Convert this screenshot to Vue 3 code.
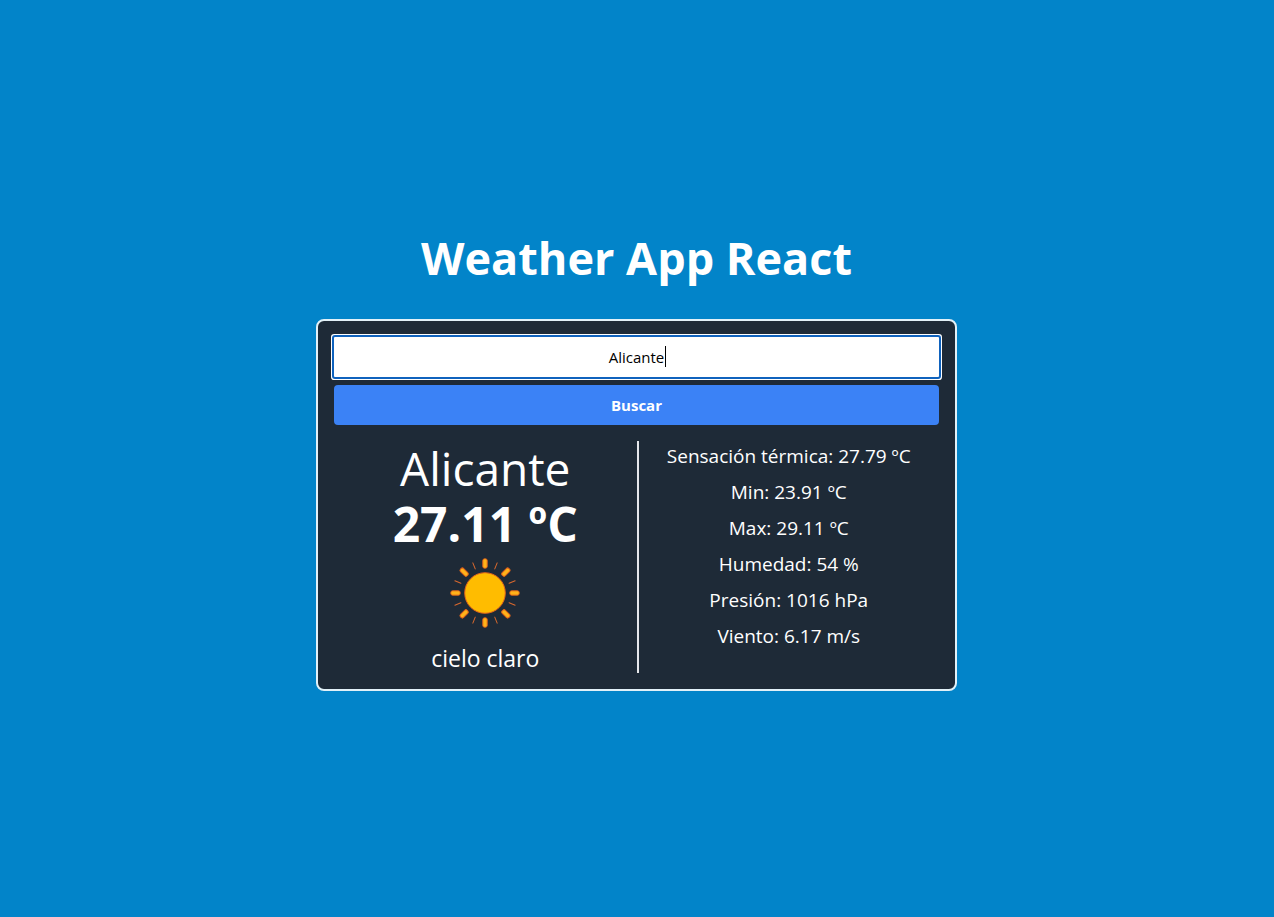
<script setup>
import { onMounted, ref } from 'vue'

const city = ref('Alicante')
const cityInput = ref(null)

const weather = {
  name: 'Alicante',
  temp: '27.11 ºC',
  description: 'cielo claro',
  details: [
    { label: 'Sensación térmica', value: '27.79 ºC' },
    { label: 'Min', value: '23.91 ºC' },
    { label: 'Max', value: '29.11 ºC' },
    { label: 'Humedad', value: '54 %' },
    { label: 'Presión', value: '1016 hPa' },
    { label: 'Viento', value: '6.17 m/s' },
  ],
}

const longRays = [0, 45, 90, 135, 180, 225, 270, 315]
const shortRays = [22, 68, 112, 158, 202, 248, 292, 338]

onMounted(() => {
  const el = cityInput.value
  el.focus()
  el.setSelectionRange(el.value.length, el.value.length)
})
</script>

<template>
  <main class="page">
    <h1 class="title">Weather App React</h1>
    <section class="card">
      <form class="search" @submit.prevent>
        <div class="field">
          <input
            ref="cityInput"
            v-model="city"
            class="search-input"
            type="text"
            aria-label="Ciudad"
            autocomplete="off"
            spellcheck="false"
          />
          <span class="caret" aria-hidden="true"></span>
        </div>
        <button class="search-button" type="submit">Buscar</button>
      </form>
      <div class="result">
        <div class="summary">
          <h2 class="city">{{ weather.name }}</h2>
          <p class="temp">{{ weather.temp }}</p>
          <svg class="icon" viewBox="0 0 80 80" aria-hidden="true">
            <g fill="#ffb31a" stroke="#e0621a" stroke-width="1">
              <rect
                v-for="a in longRays"
                :key="a"
                x="37.8"
                y="5.8"
                width="4.4"
                height="9.4"
                rx="1.8"
                :transform="`rotate(${a} 40 40)`"
              />
            </g>
            <g stroke="#d9692e" stroke-width="1" stroke-linecap="round">
              <line
                v-for="a in shortRays"
                :key="a"
                x1="40"
                y1="7.5"
                x2="40"
                y2="14"
                :transform="`rotate(${a} 40 40)`"
              />
            </g>
            <circle cx="40" cy="40" r="20.3" fill="#ffbc00" stroke="#e0621a" stroke-width="1" />
          </svg>
          <p class="description">{{ weather.description }}</p>
        </div>
        <ul class="details">
          <li v-for="d in weather.details" :key="d.label">{{ d.label }}: {{ d.value }}</li>
        </ul>
      </div>
    </section>
  </main>
</template>

<style>
body {
  margin: 0;
  background: #0284c9;
}
</style>

<style scoped>
.page {
  box-sizing: border-box;
  min-height: 100vh;
  padding-right: 1px;
  display: flex;
  flex-direction: column;
  align-items: center;
  justify-content: center;
  color: #fff;
  font-family: "Segoe UI", "Open Sans", "Noto Sans", sans-serif;
  text-align: center;
}
.title {
  margin: 0;
  padding-bottom: 29px;
  font-size: 45px;
  line-height: 64px;
  font-weight: 700;
}
.card {
  box-sizing: border-box;
  width: 100%;
  max-width: 641px;
  padding: 16px;
  border: 2px solid #e2f1f8;
  border-radius: 8px;
  background: #1e2a37;
}
.search {
  display: flex;
  flex-direction: column;
  gap: 8px;
}
.field {
  position: relative;
  display: flex;
}
.search-input {
  box-sizing: border-box;
  width: 100%;
  height: 40px;
  padding: 8px;
  border: 0;
  border-radius: 1px;
  outline: 2px solid #0f62bd;
  box-shadow: 0 0 0 3px #fff;
  background: #fff;
  color: #000;
  caret-color: transparent;
  font: inherit;
  font-size: 15px;
  line-height: 24px;
  text-align: center;
}
.caret {
  position: absolute;
  top: 9px;
  left: calc(50% + 28px);
  width: 1px;
  height: 21px;
  background: #000;
  pointer-events: none;
}
.search-button {
  height: 40px;
  padding: 8px;
  border: 0;
  border-radius: 4px;
  background: #3b82f6;
  color: #fff;
  font: inherit;
  font-size: 15px;
  font-weight: 700;
  line-height: 24px;
  cursor: pointer;
}
.result {
  display: grid;
  grid-template-columns: 1fr 1fr;
  margin-top: 16px;
}
.summary {
  display: flex;
  flex-direction: column;
  align-items: center;
}
.city,
.temp {
  margin: 0;
}
.city {
  font-size: 46px;
  font-weight: 400;
  line-height: 54px;
}
.temp {
  font-size: 48px;
  font-weight: 700;
  line-height: 58px;
}
.icon {
  width: 80px;
  height: 80px;
}
.description {
  margin: 10px 0 0;
  font-size: 23px;
  line-height: 30px;
}
.details {
  display: flex;
  flex-direction: column;
  gap: 6px;
  margin: 0;
  padding: 0;
  border-left: 2px solid #e5e7eb;
  list-style: none;
  font-size: 19px;
  line-height: 30px;
}
</style>
